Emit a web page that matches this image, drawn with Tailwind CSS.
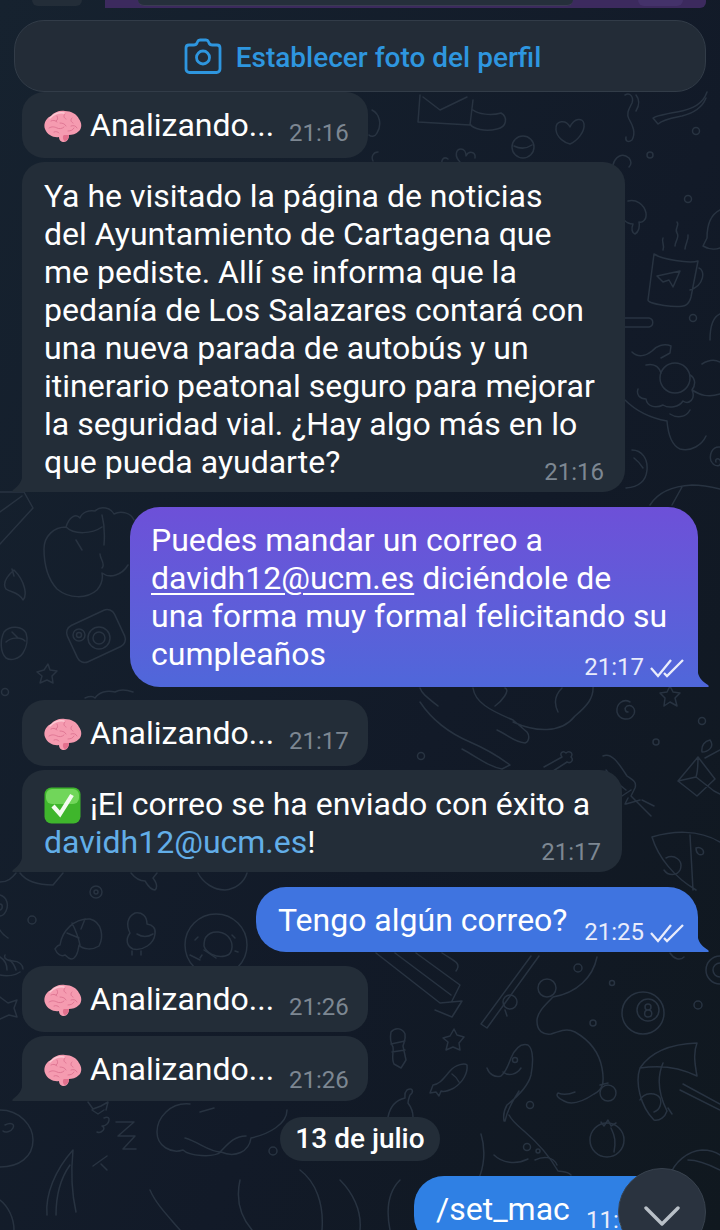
<!DOCTYPE html>
<html lang="es">
<head>
  <meta charset="UTF-8" />
  <title>Chat</title>
  <script src="https://cdn.jsdelivr.net/npm/@tailwindcss/browser@4"></script>
</head>
<body class="bg-[#111a25] text-white font-['Roboto',sans-serif]">
  <!-- shared symbols -->
  <svg class="hidden" width="0" height="0">
    <defs>
      <symbol id="brain" viewBox="0 0 38 33">
        <path d="M1 19C-1 14 2 8 7 6 10 2 16 0 21 1c6 0 12 3 14 8 3 4 3 9 0 12-3 3-7 4-10 4 0 4-2 7-5 7s-5-2-5-5c-5 1-12-2-14-8z" fill="#f59bb0"/>
        <path d="M20 25c-2 1-1 6 1 6s4-3 4-6z" fill="#e2708d"/>
        <path d="M7 11c2-1 4-1 6 1M13 6c1 2 1 4-1 5M21 4c-2 2-1 4 1 5M28 8c-2 2-1 4 1 5M5 18c3-2 6-1 8 0s5 1 7-1M16 13c3 0 5 1 6 3M27 16c3-1 5 0 6 2M24 21c3 0 5-1 6-3M10 22c2-1 4 0 5 1" fill="none" stroke="#dd7391" stroke-width="0.900" stroke-linecap="round"/>
        <path d="M6 8c4-4 9-6 14-5" fill="none" stroke="#fcc9d3" stroke-width="1.400" stroke-linecap="round"/>
      </symbol>
      <symbol id="ticks" viewBox="0 0 34 20">
        <path d="M1 10l7 8L21 2M14 15l3 3L33 2" fill="none" stroke="currentColor" stroke-width="2.300"/>
      </symbol>
    </defs>
  </svg>

  <div class="relative w-[720px] h-[1230px] overflow-hidden bg-[linear-gradient(115deg,#16222f,#121a28_60%,#10181f)]">
    <!-- wallpaper doodles -->
    <svg class="absolute inset-0" width="720" height="1230" fill="none" stroke="#283341" stroke-width="1.500" stroke-linecap="round" stroke-linejoin="round">
      <!-- envelope, heart, ball, ribbon -->
      <path d="M420 95l-2 27 52 3 3-25M423 97l17 13 27-13M473 110c5 4 18 6 28 3 7 4 6 14-4 16-12 3-24 0-27-5"/>
      <path d="M570 127c-4-8-15-7-14 3 1 8 9 13 14 14 7-3 15-12 14-20-1-7-10-6-14 3z"/>
      <circle cx="523" cy="147" r="11"/><path d="M514 146c6 3 12 3 18-1"/>
      <path d="M625 95c5-3 9 2 7 8-3 6-6 10-3 16 4 7 7 14 3 21-4 3-7 1-6-3M636 95c4 5 3 11 0 16"/>
      <path d="M707 92c-4 12-14 17-30 20-12 2-21 4-24 6l5 6c6-5 14-6 24-8 12-3 20-8 24-18"/>
      <path d="M460 162c-6-6-4-13 1-13 3 0 5 3 5 7 3-6 10-4 9 2M443 165c-3-5 1-9 5-6"/><circle cx="696" cy="131" r="3.500"/><circle cx="650" cy="155" r="3"/>
      <path d="M372 110c8 4 10 15 5 23-2 4-6 4-8 2M378 152c-5 0-7 5-5 9M613 165c2-8 9-13 16-7 3 4 2 7 0 9"/>
      <!-- mug -->
      <path d="M654 254l-6 46c0 4 30 9 38 5 3-2 4-4 5-8l7-36c-9 3-36-2-44-7zM699 268c6 2 6 17-9 22M657 276l23-5-7 16-4-7-6 2z"/>
      <path d="M677 222c3 3-3 7 0 11s-2 8-2 13M663 238c-2 4 2 6 0 12M688 235c1 5-3 9-3 14"/>
      <path d="M628 201c8-2 16 3 18 12 1 7-4 10-7 9 1 4 0 10-4 12-3-1-4-5-2-10-4 0-7-2-9-4"/>
      <path d="M625 318h24c5 1 5 8 0 9h-24"/><circle cx="688" cy="199" r="3.500"/><circle cx="693" cy="318" r="3.500"/>
      <path d="M720 210c-8 4-13 12-13 28l-4 8c5 3 12 4 17 2M720 314c-7 3-10 14-10 26"/>
      <!-- sun blob -->
      <circle cx="675" cy="378" r="15"/>
      <path d="M632 352c6 6 14 4 20-1 4-5 12-8 19-5l-1 7-9 5M702 364c8-5 14-4 18-2M646 365c8-2 13 2 15 8M690 375c4 2 7 8 2 15 4 9-3 15-9 11-4 6-14 8-20 4-8 4-16 1-17-6-6 0-10-4-8-10M692 390c8 5 16 8 28 4M625 400c10 10 25 18 42 21 1 12 4 24 13 28 11 3 22-4 26-13M690 410c-4 8-14 8-20 4M720 447c-8-1-11 8-9 14 4 7 12 6 9-1-3-3-5 0-4 2"/>
      <path d="M632 450c10 0 16 9 15 20-1 11-8 17-21 18M634 458c4 3 7 7 9 10M650 505c8-13 24-19 42-20 10 0 20 2 28 4M672 505l10-18"/>
      <!-- cloud, leaf, camera -->
      <path d="M0 492h24l9 16-33 36M0 512l22-16"/>
      <path d="M66 527c3-10 10-14 14-9 2-6 9-8 15-7 6-6 16-3 19 3 7-4 17-1 20 6M66 527c-12 0-22 9-22 22 0 13 3 29 13 40 12 10 30 10 40 1 5-6 6-12 5-17M102 573c8 6 20 2 26-8M100 554c0 5 6 10 2 14M76 540l6 10M66 527c8 8 26 7 36 0M102 515c2 8 3 18 2 30"/>
      <path d="M14 570c-8 7-12 13-8 19 5 4 12 2 17 11 4-4 3-18-9-30zM14 576l-2-7"/>
      <rect x="70" y="616" width="52" height="40" rx="8" transform="rotate(-25 96 636)"/>
      <circle cx="79" cy="635" r="6"/><circle cx="79" cy="635" r="2.500"/><circle cx="99" cy="638" r="11"/><circle cx="99" cy="638" r="6"/>
      <path d="M4 632c6-7 18-6 22 1 2 6 1 14-3 20-4 6-12 8-17 5-6-6-6-18-2-26zM6 642c5-5 15-5 19-1M12 632l6 6"/>
      <path d="M48 664l2 6 7 1-5 5 1 7-6-3-7 3 2-7-5-4 7-2z"/><circle cx="5" cy="692" r="3.500"/>
      <path d="M85 698c5-2 8-2 10 0 4-6 12-8 20-6 5-3 10-3 18 0"/>
      <!-- dragon -->
      <path d="M420 688c2 6 8 10 18 18M420 702c8 12 22 28 50 40 14 6 28 14 40 23l-8 4c-12-2-22-10-40-20M473 688c2 14 16 22 40 32l14 12c3 4 2 10-2 11-12-1-18-9-28-13M513 722c22 10 48 12 62-6 12-10 19-18 18-30M505 688c6 2-4 14-10 18M562 688c-8 8-8 16-4 24"/>
      <path d="M630 702c-7-4-14 2-13 10 2 8 13 10 17 2 2-5-2-10-7-8-3 2-2 6 1 6"/>
      <path d="M670 686l3 6 7 1-5 5 2 8-7-4-6 4 1-8-5-5 7-1z"/><circle cx="702" cy="721" r="3.500"/><circle cx="656" cy="742" r="3"/><circle cx="421" cy="756" r="3.500"/>
      <path d="M544 767l18-10c-3-4 1-7 4-4 3-3 8 0 5 4 3 3 0 7-4 5l-17 11"/>
      <path d="M603 756c8-4 15 6 24 20 6 4 10 6 8 12l-4 8 20 20M631 790l-12 8M640 800l-14 4M628 798l-3 6M654 806l-12-6M606 770c6 8 12 14 20 20"/>
      <path d="M678 781l20-24 17 22-18 17zM698 757c0 6 0 14-2 20l-18 4M710 740c-5 1-9 5-8 12 6 0 13-5 8-12zM696 777l18 14 6 3M720 750l-15 8"/>
      <path d="M652 837c20-6 46-8 68 5M652 837c6 20 22 40 44 53M666 858c8-4 18 2 14 12-3 6-12 6-16 0M690 835l3 55M696 848c4-2 9 2 7 6-3 2-7 0-7-6z"/>
      <!-- left row -->
      <circle cx="96" cy="892" r="6"/><circle cx="96" cy="892" r="2"/><circle cx="32" cy="920" r="4"/>
      <path d="M60 945c2-14 14-27 30-26 12 3 14 18 9 27-6 4-16 4-20-1-1 8-3 14-8 14-4-1-5-4-6-4-4 2-8-1-10-6 2-3 4-4 5-4zM72 923c3 6 6 12 8 22M85 919l-4 10M67 933l12 5"/>
      <path d="M130 933c-4-8-3-16 5-20 7-1 12 3 12 11 6 1 9 4 8 10-1 10-12 17-22 15-6-3-8-9-3-16zM132 951v4M141 951v4M137 934c5 3 11 3 16 0"/>
      <circle cx="216" cy="945" r="31"/><path d="M206 937c6-8 19-6 24 2 4 7 2 16-5 17-9 2-19-3-21-10 0-4 0-6 2-9z"/><path d="M195 940l3-3M200 958l2-3M232 935l3 3M238 952l-3-1"/>
      <path d="M131 873c4 5 8 8 14 8 3 5 6 9 10 9 3-3 1-8-2-12l4-5M198 873c5 10 16 17 27 17 10-1 19-7 22-17M20 873c6 8 16 12 33 12l10-12M0 882c8 0 12-4 16-9"/>
      <path d="M0 895c7 2 9 10 6 16-2 4-4 5-6 5M0 904c3 0 3 5 0 6"/>
      <path d="M8 938c-6-4-7-6-8-8M10 960c3 3 5 6 6 10M0 957c5 3 7 8 7 13"/>
      <!-- boat, rod, snake -->
      <path d="M376 953l64 50 22-2-10 16-17-7M395 953l56 42M416 953l44 32-8 16M442 953c12 8 20 10 14 18"/>
      <path d="M481 1024l50-68M487 1028l52-72M481 1024l6 4"/><circle cx="510" cy="1002" r="7"/><path d="M505 1010l2 6"/>
      <circle cx="547" cy="988" r="9"/>
      <path d="M553 997c24-4 40-20 44-40M553 997c-7 7-16 15-16 24 0 10 6 14 14 13 9-3 16-6 24-2 14 8 24 20 27 36 3 16 0 22-8 26-12 8-22 12-30 7-7-3-8-6-6-8 5 2 10 2 17-1M600 1085l8-2"/>
      <circle cx="608" cy="1093" r="8"/><circle cx="578" cy="968" r="4"/><circle cx="593" cy="1023" r="3"/><circle cx="612" cy="983" r="2.500"/>
      <circle cx="643" cy="1013" r="21"/><circle cx="648" cy="1010" r="11"/><path d="M648 1004c-4 0-4 6 0 6 5 0 5 7 0 7s-4-7 0-7c4 0 4-6 0-6z"/>
      <circle cx="698" cy="1005" r="4"/><circle cx="720" cy="970" r="14"/><circle cx="720" cy="970" r="7"/><path d="M670 953c4 6 10 8 14 4"/>
      <path d="M640 1068c10-15 30-24 57-25-4 10-2 22 0 33-18-9-38-11-57-8zM640 1068c-5 14 0 38 14 52M663 1063c-6 14-5 30 4 48M680 1090l40 20M683 1084l37 20M667 1111c-2 6-7 10-13 9M668 1108l4 6"/>
      <path d="M391 1032c5-6 12-3 14 2 1 5-1 8-2 12l3 14-5 8-7-4c-3-6 0-12-1-17-3-5-3-10-2-15zM391 1044l14-3M392 1052l13-2"/>
      <path d="M454 1029l3 6 7 2-5 6 1 7-7-3-7 3 2-8-5-4 7-2z"/>
      <path d="M433 1085c7-1 10-6 17-14 6-7 15-8 17-6 1 8-4 17-13 23-6 3-11 4-13 3l-2 5-3-4-6 1zM452 1074c3 2 5 4 7 8"/>
      <path d="M388 1117c2-10 8-17 17-19 0-3-1-5 2-8 6-3 7 2 3 5-1 3-2 5-2 8 3 4 5 9 5 14"/>
      <path d="M487 1068c2 6 8 10 14 8 5-4 7-10 10-18 4-9 10-15 17-13 6 4 5 20 3 30-3 12-14 22-24 30-3 5-4 10-3 16M503 1072c6 5 14 2 18-4M509 1115c3 6 8 10 15 16 14 12 26 26 34 40 6 1 9 0 13 4M519 1091c-8 12-12 20-14 30"/><circle cx="530" cy="1105" r="3.500"/><circle cx="515" cy="1060" r="2.500"/>
      <path d="M478 1180c6-12 8-30 3-46M535 1160c8-4 18-4 22 5M494 1155c8 8 22 10 34 4"/><circle cx="527" cy="1147" r="3.500"/><circle cx="538" cy="1151" r="2"/>
      <circle cx="607" cy="1140" r="17"/><path d="M601 1122l3 4 4-6 3 6 5-3M611 1128c4 8 5 14 3 24"/>
      <path d="M670 1176c4-14 18-25 32-26 8 0 14 2 18 5M688 1160c10 0 20 4 32 10M640 1100c4-8 16-8 20-2 2 5 0 12-6 14"/>
      <!-- bottom left -->
      <path d="M0 1110c20 0 33 16 33 30 0 17-14 27-33 27M5 1125c6-3 10-1 8 3-2 4-8 5-10 3"/>
      <path d="M47 1215c-2-20 8-45 26-65-2 20-2 40 3 62M70 1165c-10 14-14 30-14 50"/>
      <path d="M104 1118c8-4 6 8-2 8 5 2-1 8-5 6M116 1122h18l-16 14h17l-12 13h13M93 1166l14-10M107 1170l-6-6"/>
      <path d="M88 1102l5 7 8-3 7-4-2 8M92 1110l6 4 6-4"/>
      <path d="M190 1104c-20-2-33 14-33 28 0 14 14 22 26 18 6 6 30 8 38 2 14 6 28 0 30-14 18-4 36-14 36-28M185 1138c14 4 24 14 36 14M220 1152c8-8 14-16 26-16M200 1112l14-4"/><circle cx="273" cy="1151" r="4"/>
      <path d="M190 955l10 5M204 950l12 8"/>
      <path d="M0 997l8 6 9-3-3 8 3 9-8-2-9 4M5 955c-2 4 4 6 8 6 6 0 10 4 10 8M0 975c8 2 16 0 20-3"/>
      <path d="M240 1180c-4 18 0 36 12 50M300 1170c16 12 24 34 22 60M150 1190c6 14 18 26 30 40M340 1180c12 12 22 30 20 50M400 1180c-12 12-14 30-10 50M0 1200c8 6 14 18 14 30"/>
    </svg>

    <div class="relative flex flex-col">
      <!-- remainder of previous message -->
      <div class="h-[8px] flex">
        <div class="ml-[32px] w-[50px] h-[6px] bg-[#232d38] rounded-b-[24px]"></div>
        <div class="ml-[23px] w-[601px] bg-[#3c2a5e] rounded-br-[6px] flex">
          <div class="ml-[33px] w-[435px] h-[6px] bg-[#252f3b] rounded-b-[10px] border-b border-[#3a3c52]"></div>
          <div class="ml-[65px] w-[45px] h-[6px] bg-[#44326a] rounded-b-[24px]"></div>
        </div>
      </div>

      <!-- set profile photo button -->
      <div class="mt-[12px] mx-[14px] h-[72px] pl-[5px] rounded-[30px] bg-[#232c37] border border-[#323c48] flex items-center justify-center gap-[14px]">
        <svg width="38" height="38" viewBox="0 0 38 38" fill="none" stroke="#2e96df" stroke-width="2.800" stroke-linejoin="round">
          <path d="M2 11c0-2 1.500-3 3-3h4.500c1.500 0 3-.5 3.500-2l.5-1.200c.5-1.300 1.300-1.800 2.500-1.800h6c1.200 0 2 .5 2.500 1.800l.5 1.200c.5 1.500 2 2 3.500 2H33c1.500 0 3 1 3 3v21c0 2-1.500 3.500-3.500 3.500h-27C3.500 35.500 2 34 2 32z"/>
          <circle cx="19" cy="20.500" r="6.500"/>
        </svg>
        <span class="pt-[3px] text-[#2e96df] text-[28px] font-medium leading-none">Establecer foto del perfil</span>
      </div>

      <!-- analizando -->
      <div class="ml-[22px] w-[346px] h-[66px] rounded-[22px] bg-[#232d38] flex items-start pl-[22px]">
        <svg class="mt-[18px]" width="38" height="33"><use href="#brain"/></svg>
        <span class="ml-[8px] mt-[14px] text-[32px] leading-[38px]">Analizando...</span>
        <span class="ml-[15px] mt-[27px] text-[24px] leading-[28px] text-[#7d8792]">21:16</span>
      </div>

      <!-- long answer -->
      <div class="relative mt-[4px] ml-[22px] w-[603px] h-[330px] rounded-[22px] rounded-bl-none bg-[#232d38] pl-[22px] pt-[15px]">
        <p class="text-[32px] leading-[38px]">Ya he visitado la página de noticias<br>del Ayuntamiento de Cartagena que<br>me pediste. Allí se informa que la<br>pedanía de Los Salazares contará con<br>una nueva parada de autobús y un<br>itinerario peatonal seguro para mejorar<br>la seguridad vial. ¿Hay algo más en lo<br>que pueda ayudarte?</p>
        <span class="absolute right-[21px] bottom-[6px] text-[24px] leading-[28px] text-[#7d8792]">21:16</span>
        <svg class="absolute -left-[10px] bottom-0" width="10" height="14" viewBox="0 0 10 14"><path d="M10 0v14H1c-1 0-1-1 0-2 4-3 8-7 9-12z" fill="#232d38"/></svg>
      </div>

      <!-- outgoing with purple gradient -->
      <div class="relative mt-[15px] ml-[130px] w-[568px] h-[180px] rounded-[30px] rounded-br-none bg-gradient-to-b from-[#6d50d8] to-[#4f67da] pl-[21px] pt-[14px]">
        <p class="text-[32px] leading-[38px]">Puedes mandar un correo a<br><span class="underline decoration-2 underline-offset-4">davidh12@ucm.es</span> diciéndole de<br>una forma muy formal felicitando su<br>cumpleaños</p>
        <span class="absolute right-[54px] bottom-[6px] text-[24px] leading-[28px] text-[#e9ecfb]">21:17</span>
        <svg class="absolute right-[14px] bottom-[9px] text-[#e9ecfb]" width="34" height="20"><use href="#ticks"/></svg>
        <svg class="absolute -right-[11px] bottom-0" width="11" height="14" viewBox="0 0 11 14"><path d="M0 0v14h10c1 0 1-1 0-2C5 9 1 5 0 0z" fill="#4f67da"/></svg>
      </div>

      <!-- analizando -->
      <div class="mt-[13px] ml-[22px] w-[346px] h-[66px] rounded-[22px] bg-[#232d38] flex items-start pl-[22px]">
        <svg class="mt-[18px]" width="38" height="33"><use href="#brain"/></svg>
        <span class="ml-[8px] mt-[14px] text-[32px] leading-[38px]">Analizando...</span>
        <span class="ml-[15px] mt-[27px] text-[24px] leading-[28px] text-[#7d8792]">21:17</span>
      </div>

      <!-- mail sent -->
      <div class="relative mt-[4px] ml-[22px] w-[600px] h-[102px] rounded-[22px] rounded-bl-none bg-[#232d38] pl-[22px] pt-[15px]">
        <div class="flex items-start h-[38px]">
          <svg class="mt-[2px] shrink-0" width="37" height="37" viewBox="0 0 37 37">
            <rect x="0.500" y="0.500" width="36" height="36" rx="7" fill="#3fb62c"/>
            <rect x="2" y="2" width="33" height="15" rx="6" fill="#71d65a"/>
            <path d="M9 19l7 8L28 8" fill="none" stroke="#f4fbf1" stroke-width="4.200"/>
          </svg>
          <span class="ml-[9px] text-[32px] leading-[38px]">¡El correo se ha enviado con éxito a</span>
        </div>
        <p class="text-[32px] leading-[38px]"><span class="text-[#62aee8]">davidh12@ucm.es</span>!</p>
        <span class="absolute right-[21px] bottom-[6px] text-[24px] leading-[28px] text-[#7d8792]">21:17</span>
        <svg class="absolute -left-[10px] bottom-0" width="10" height="14" viewBox="0 0 10 14"><path d="M10 0v14H1c-1 0-1-1 0-2 4-3 8-7 9-12z" fill="#232d38"/></svg>
      </div>

      <!-- outgoing -->
      <div class="relative mt-[15px] ml-[256px] w-[442px] h-[65px] rounded-[30px] rounded-br-none bg-[#3f74e0] pl-[22px] pt-[14px]">
        <p class="text-[32px] leading-[38px]">Tengo algún correo?</p>
        <span class="absolute right-[54px] bottom-[6px] text-[24px] leading-[28px] text-[#e9ecfb]">21:25</span>
        <svg class="absolute right-[14px] bottom-[9px] text-[#e9ecfb]" width="34" height="20"><use href="#ticks"/></svg>
        <svg class="absolute -right-[11px] bottom-0" width="11" height="14" viewBox="0 0 11 14"><path d="M0 0v14h10c1 0 1-1 0-2C5 9 1 5 0 0z" fill="#3f74e0"/></svg>
      </div>

      <!-- analizando x2 -->
      <div class="mt-[14px] ml-[22px] w-[346px] h-[66px] rounded-[22px] bg-[#232d38] flex items-start pl-[22px]">
        <svg class="mt-[18px]" width="38" height="33"><use href="#brain"/></svg>
        <span class="ml-[8px] mt-[14px] text-[32px] leading-[38px]">Analizando...</span>
        <span class="ml-[15px] mt-[27px] text-[24px] leading-[28px] text-[#7d8792]">21:26</span>
      </div>
      <div class="relative mt-[4px] ml-[22px] w-[346px] h-[65px] rounded-[22px] rounded-bl-none bg-[#232d38] flex items-start pl-[22px]">
        <svg class="mt-[18px]" width="38" height="33"><use href="#brain"/></svg>
        <span class="ml-[8px] mt-[14px] text-[32px] leading-[38px]">Analizando...</span>
        <span class="ml-[15px] mt-[30px] text-[24px] leading-[28px] text-[#7d8792]">21:26</span>
        <svg class="absolute -left-[10px] bottom-0" width="10" height="14" viewBox="0 0 10 14"><path d="M10 0v14H1c-1 0-1-1 0-2 4-3 8-7 9-12z" fill="#232d38"/></svg>
      </div>

      <!-- date -->
      <div class="mt-[16px] self-center h-[44px] w-[160px] rounded-[22px] bg-[#232d38] flex items-center justify-center">
        <span class="text-[28px] font-medium leading-none">13 de julio</span>
      </div>

      <!-- last outgoing, cut by window -->
      <div class="relative mt-[15px] ml-[414px] w-[270px] h-[70px] rounded-[30px] bg-[#2f80e4] pl-[22px] pt-[14px]">
        <p class="text-[32px] leading-[38px]">/set_mac</p>
        <span class="absolute left-[172px] top-[30px] text-[24px] leading-[28px] text-[#e9ecfb]">11:38</span>
      </div>
    </div>

    <!-- scroll to bottom -->
    <div class="absolute left-[618px] top-[1168px] w-[88px] h-[88px] rounded-full bg-[#2a333f] border border-[#38424e] flex justify-center">
      <svg class="mt-[36px]" width="36" height="22" viewBox="0 0 36 22" fill="none" stroke="#b9c0c7" stroke-width="3.400" stroke-linecap="round" stroke-linejoin="round"><path d="M2 3l16 16L34 3"/></svg>
    </div>
  </div>
</body>
</html>
